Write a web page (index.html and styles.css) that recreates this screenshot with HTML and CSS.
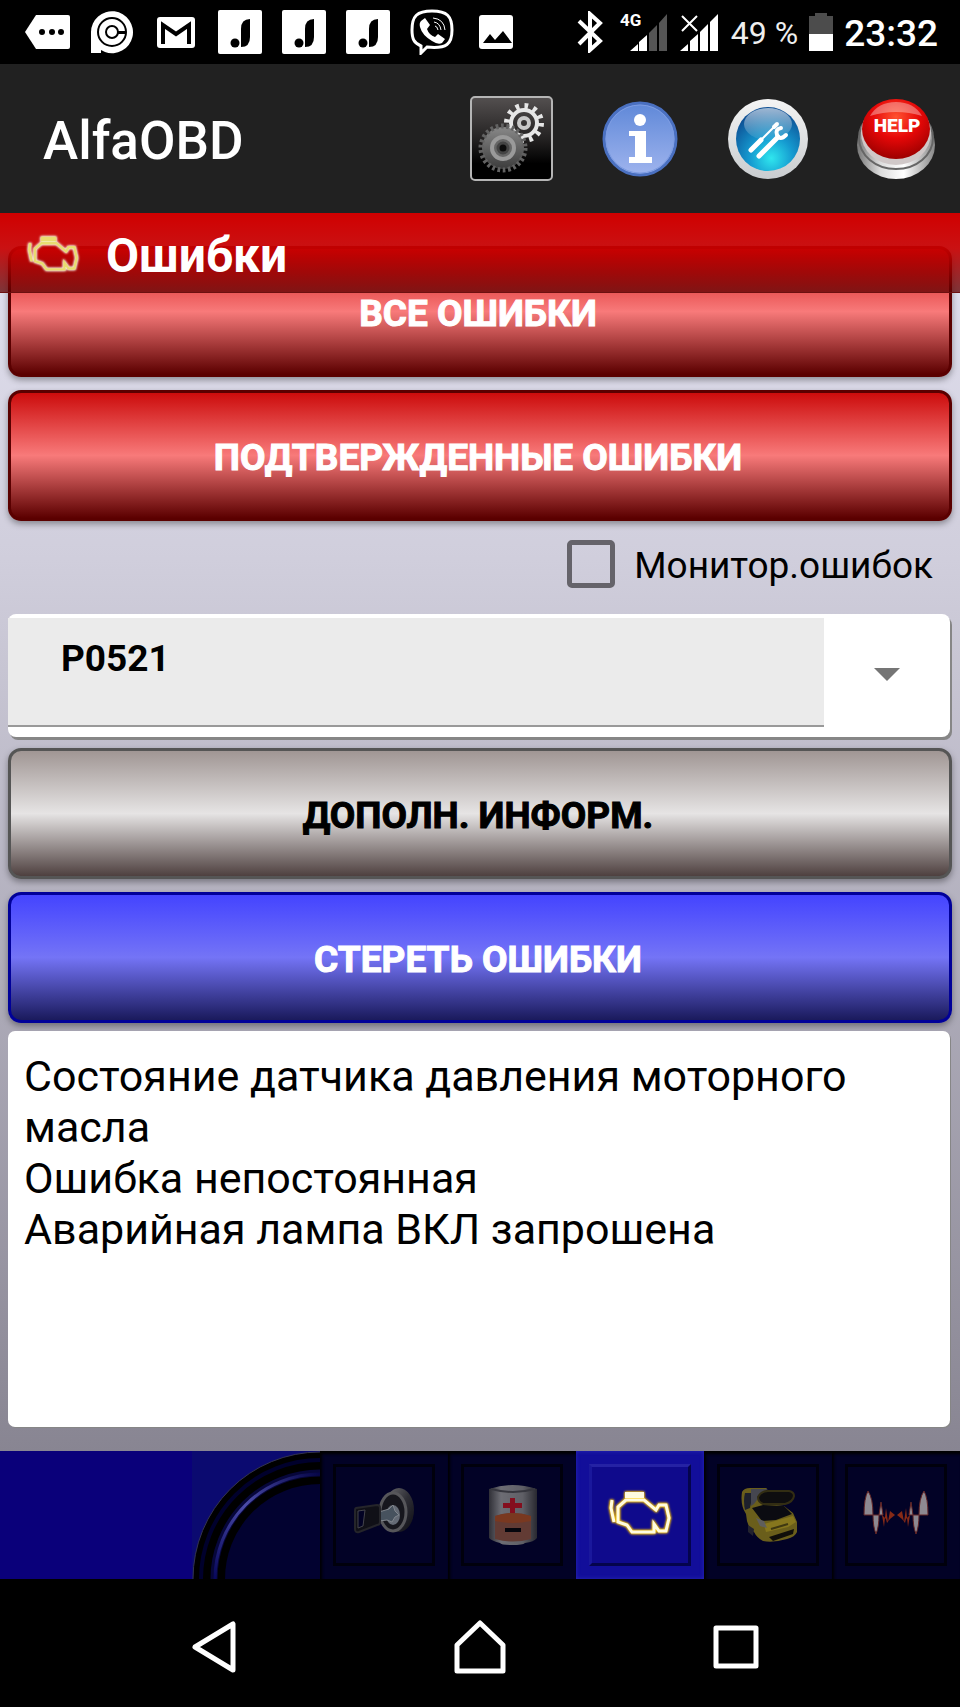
FILE: index.html
```
<!DOCTYPE html>
<html lang="ru">
<head>
    <meta charset="UTF-8">
    <meta name="viewport" content="width=device-width, initial-scale=1.0">
    <title>AlfaOBD</title>
    <link rel="stylesheet" href="styles.css">
</head>
<body>
    <!-- shared shapes -->
    <svg class="defs" width="0" height="0" aria-hidden="true">
        <defs>
            <symbol id="japp" viewBox="0 0 46 46">
                <rect x="1" y="1" width="44" height="44" rx="2" fill="#fff"/>
                <circle cx="18" cy="34" r="4.500" fill="#000"/>
                <path d="M24 38V20q0-10 9-10v18q0 10-9 10z" fill="#000"/>
            </symbol>
            <symbol id="engine" viewBox="30 38 66 46">
                <path d="M48 44h19" stroke-width="6"/>
                <path d="M35 49l-1 8 3 14" stroke-width="3"/>
                <path d="M49 49l-8 7v15l9 3 5 7h22v-8l5 7h7l3-13-3-13h-7l-3 5-12-10z" stroke-width="3"/>
            </symbol>
        </defs>
    </svg>

    <div class="statusbar">
        <div class="notifications">
            <svg width="46" height="46" viewBox="0 0 46 46"><path d="M11 6h32q2 0 2 2v30q0 2-2 2H11L0 23z" fill="#fff"/><circle cx="17" cy="23" r="3"/><circle cx="27" cy="23" r="3"/><circle cx="36" cy="23" r="3"/></svg>
            <svg width="46" height="46" viewBox="0 0 46 46"><path d="M2 44V23a21 21 0 1 1 14 20l-4-2v3z" fill="#fff"/><circle cx="23" cy="23" r="14" fill="none" stroke="#000" stroke-width="2"/><circle cx="23" cy="23" r="6" fill="none" stroke="#000" stroke-width="2"/><path d="M29 22h8v3h-8z"/></svg>
            <svg width="46" height="46" viewBox="0 0 46 46"><rect x="4" y="8" width="38" height="31" rx="3" fill="#fff"/><path d="M10 35V16l13 9 13-9v19" fill="none" stroke="#000" stroke-width="4"/></svg>
            <svg width="46" height="46"><use href="#japp"/></svg>
            <svg width="46" height="46"><use href="#japp"/></svg>
            <svg width="46" height="46"><use href="#japp"/></svg>
            <svg width="46" height="46" viewBox="0 0 46 46"><path d="M23 2C8 2 3 7 3 21c0 9 2 13 9 16v7l6-6c20 2 25-3 25-17C43 7 38 2 23 2z" fill="none" stroke="#fff" stroke-width="3"/><path d="M12 12l4-3 5 7-3 4q2 6 8 8l3-3 7 5-3 4q-4 2-10-2-10-6-12-14-1-4 1-6z" fill="#fff"/><path d="M24 9q11 1 12 12M25 13q6 1 7 8M26 17q2 0 3 4" fill="none" stroke="#fff" stroke-width="1"/></svg>
            <svg width="46" height="46" viewBox="0 0 46 46"><rect x="6" y="6" width="34" height="34" rx="3" fill="#fff"/><path d="M10 34l7-9 5 6 8-9 9 12z"/></svg>
        </div>
        <div class="indicators">
            <svg width="32" height="42" viewBox="0 0 32 42"><path d="M2 10l21 20-10 9V3l10 9L2 33" fill="none" stroke="#fff" stroke-width="4"/></svg>
            <svg width="50" height="48" viewBox="0 -3 50 48"><text x="1" y="15" class="net">4G</text><path d="M11 40l8-7v7zM20 31l8-7v16h-8z" fill="#fff"/><path d="M30 22l8-8v26h-8zM40 12l8-9v37h-8z" fill="#555"/></svg>
            <svg width="42" height="42" viewBox="0 0 42 42"><path d="M3 5l15 15M18 5L3 20" stroke="#fff" stroke-width="2"/><path d="M1 40l8-7v7zM11 30l8-7v17h-8zM21 21l8-8v27h-8zM31 11l8-8v37h-8z" fill="#fff"/></svg>
            <span class="percent">49 %</span>
            <svg width="26" height="42" viewBox="0 0 26 42"><path d="M1 5h6V2h12v3h6v18H1z" fill="#4c4c4c"/><path d="M1 23h24v17H1z" fill="#fff"/></svg>
            <span class="clock">23:32</span>
        </div>
    </div>

    <header class="appbar">
        <h1>AlfaOBD</h1>
        <button type="button" class="action" aria-label="Настройки">
            <svg width="84" height="86" viewBox="0 0 84 86">
                <defs>
                    <linearGradient id="plate" x1="0" y1="0" x2="0" y2="1"><stop offset="0" stop-color="#545050"/><stop offset="0.500" stop-color="#242222"/><stop offset="0.800" stop-color="#000"/></linearGradient>
                    <linearGradient id="steel" x1="0" y1="0" x2="0" y2="1"><stop offset="0" stop-color="#888"/><stop offset="1" stop-color="#3c3c3c"/></linearGradient>
                </defs>
                <rect x="1" y="1" width="81" height="83" rx="4" fill="url(#plate)" stroke="#b5b5b5" stroke-width="2"/>
                <circle cx="54" cy="27" r="13" fill="none" stroke="#e6e6e6" stroke-width="4"/>
                <circle cx="54" cy="27" r="17" fill="none" stroke="#e6e6e6" stroke-width="6" stroke-dasharray="3.600 5.300"/>
                <circle cx="54" cy="27" r="5" fill="none" stroke="#c8c8c8" stroke-width="4"/>
                <circle cx="33" cy="52" r="21" fill="url(#steel)"/>
                <circle cx="33" cy="52" r="22" fill="none" stroke="#626262" stroke-width="5" stroke-dasharray="2.700 2.618"/>
                <circle cx="33" cy="52" r="11" fill="#666" stroke="#9a9a9a" stroke-width="4"/>
                <circle cx="33" cy="52" r="5" fill="#0c0c0c" stroke="#444" stroke-width="3"/>
            </svg>
        </button>
        <button type="button" class="action" aria-label="Информация">
            <svg width="76" height="76" viewBox="0 0 76 76">
                <defs><linearGradient id="info" x1="0" y1="0" x2="0" y2="1"><stop offset="0" stop-color="#5f88d8"/><stop offset="1" stop-color="#9fb4ee"/></linearGradient></defs>
                <circle cx="38" cy="38" r="36" fill="url(#info)" stroke="#4a70c0" stroke-width="3"/>
                <circle cx="38" cy="38" r="34" fill="none" stroke="#7d9ce2" stroke-width="1"/>
                <circle cx="38" cy="19" r="6" fill="#fff"/>
                <path d="M27 30h17v26h6v6H27v-6h6V35h-6z" fill="#fff"/>
            </svg>
        </button>
        <button type="button" class="action" aria-label="Инструменты">
            <svg width="80" height="80" viewBox="0 0 80 80">
                <defs>
                    <linearGradient id="ring" x1="0" y1="0" x2="0" y2="1"><stop offset="0" stop-color="#f4f4f4"/><stop offset="1" stop-color="#c9cccf"/></linearGradient>
                    <radialGradient id="pool" cx="0.550" cy="0.800" r="0.750"><stop offset="0" stop-color="#2fe6ee"/><stop offset="0.450" stop-color="#159ad0"/><stop offset="1" stop-color="#0d4f94"/></radialGradient>
                    <linearGradient id="gloss" x1="0" y1="0" x2="0" y2="1"><stop offset="0" stop-color="#fff" stop-opacity="0.600"/><stop offset="1" stop-color="#fff" stop-opacity="0.050"/></linearGradient>
                </defs>
                <circle cx="40" cy="40" r="40" fill="url(#ring)"/>
                <circle cx="40" cy="40" r="32" fill="url(#pool)"/>
                <ellipse cx="40" cy="25" rx="24" ry="16" fill="url(#gloss)"/>
                <g fill="none" stroke="#fff" stroke-linecap="round">
                    <path d="M23 51l10-10" stroke-width="5"/>
                    <path d="M32 42l14-14" stroke-width="2"/>
                    <path d="M46 28l3-3" stroke-width="4"/>
                    <path d="M31 57l19-19" stroke-width="5"/>
                    <path d="M53 29q-6 1-4 7 3 6 9 0" stroke-width="4"/>
                </g>
            </svg>
        </button>
        <button type="button" class="action" aria-label="Помощь">
            <svg width="80" height="82" viewBox="0 0 80 82">
                <defs>
                    <linearGradient id="base" x1="0" y1="0" x2="1" y2="0"><stop offset="0" stop-color="#777"/><stop offset="0.300" stop-color="#ddd"/><stop offset="0.600" stop-color="#fff"/><stop offset="1" stop-color="#888"/></linearGradient>
                    <radialGradient id="dome" cx="0.500" cy="0.300" r="0.700"><stop offset="0" stop-color="#ff5230"/><stop offset="0.500" stop-color="#e60808"/><stop offset="1" stop-color="#9d0000"/></radialGradient>
                </defs>
                <ellipse cx="40" cy="47" rx="39" ry="34" fill="url(#base)"/>
                <ellipse cx="40" cy="40" rx="37" ry="31" fill="none" stroke="#666" stroke-width="2"/>
                <ellipse cx="40" cy="35" rx="35" ry="32" fill="#d0c8c8"/>
                <ellipse cx="40" cy="31" rx="34" ry="30" fill="url(#dome)"/>
                <path d="M14 18Q22 4 40 4t26 14q-26-8-52 0z" fill="#fff" opacity="0.350"/>
                <text x="41" y="34" text-anchor="middle" class="help">HELP</text>
            </svg>
        </button>
    </header>

    <main class="screen">
        <div class="titlebar">
            <svg class="engine engine-title" width="54" height="40"><use href="#engine"/></svg>
            <h2>Ошибки</h2>
        </div>
        <button type="button" class="btn red">ВСЕ ОШИБКИ</button>
        <button type="button" class="btn red">ПОДТВЕРЖДЕННЫЕ ОШИБКИ</button>
        <div class="monitor">
            <input type="checkbox" id="monitor">
            <label for="monitor">Монитор.ошибок</label>
        </div>
        <div class="spinner">
            <select id="code" aria-label="Код ошибки">
                <option>P0521</option>
            </select>
            <label class="arrow" for="code"></label>
        </div>
        <button type="button" class="btn gray">ДОПОЛН. ИНФОРМ.</button>
        <button type="button" class="btn blue">СТЕРЕТЬ ОШИБКИ</button>
        <textarea class="details" aria-label="Описание ошибки" readonly>Состояние датчика давления моторного масла
Ошибка непостоянная
Аварийная лампа ВКЛ запрошена</textarea>
    </main>

    <nav class="tabs">
        <div class="corner">
            <svg width="128" height="128" viewBox="0 0 128 128">
                <defs><linearGradient id="shine" x1="0" y1="1" x2="1" y2="0"><stop offset="0" stop-color="#08085c"/><stop offset="0.500" stop-color="#4b4ba8"/><stop offset="1" stop-color="#060648"/></linearGradient></defs>
                <rect width="128" height="128" fill="#0b0a70"/>
                <circle cx="128" cy="128" r="127" fill="#000" stroke="#333350" stroke-width="1"/>
                <circle cx="128" cy="128" r="119" fill="none" stroke="#00002c" stroke-width="4"/>
                <path d="M22 128A106 106 0 0 1 128 22" fill="none" stroke="#06063a" stroke-width="7"/>
                <path d="M23 128A105 105 0 0 1 128 23" fill="none" stroke="url(#shine)" stroke-width="3"/>
                <circle cx="128" cy="128" r="97" fill="#020230" stroke="#000" stroke-width="4"/>
            </svg>
        </div>
        <button type="button" class="tab" aria-label="Подключение">
            <svg width="128" height="128" viewBox="0 0 128 128">
                <defs><linearGradient id="lock" x1="0" y1="0" x2="1" y2="1"><stop offset="0" stop-color="#8a8a86"/><stop offset="0.500" stop-color="#3a3a3a"/><stop offset="1" stop-color="#101010"/></linearGradient></defs>
                <ellipse cx="79" cy="59" rx="15" ry="22" fill="url(#lock)"/>
                <ellipse cx="73" cy="61" rx="13" ry="19" fill="#1c1c1c" stroke="#6b6b68" stroke-width="3"/>
                <ellipse cx="73" cy="64" rx="7" ry="10" fill="#7d8589"/>
                <path d="M59 61l10-3 4-4 2 6 4 4-4 2-3 5-5-2-8 1z" fill="#59666c" stroke="#a0a6a6" stroke-width="1"/>
                <path d="M36 57l21-3q3 0 3 3v14q0 3-3 3l-18 7q-4 1-4-3V60q0-3 1-3z" fill="#141414" stroke="#2e2e2c" stroke-width="2"/>
                <path d="M38 60l7-1-2 16-5 2z" fill="#020224" stroke="#555" stroke-width="1"/>
            </svg>
        </button>
        <button type="button" class="tab" aria-label="Состояние">
            <svg width="128" height="128" viewBox="0 0 128 128">
                <defs><linearGradient id="cell" x1="0" y1="0" x2="1" y2="0"><stop offset="0" stop-color="#3c3c3c"/><stop offset="0.250" stop-color="#888"/><stop offset="0.700" stop-color="#777"/><stop offset="1" stop-color="#333"/></linearGradient></defs>
                <path d="M41 38q23-8 48 0v49q-3 4-12 5-2 2-13 2t-12-2q-8-2-11-5z" fill="url(#cell)"/>
                <path d="M43 38q22 6 44 0" fill="none" stroke="#444" stroke-width="2"/>
                <path d="M47 65q18-6 36 0v23q-18 5-36 0z" fill="#7b4a38"/>
                <path d="M47 65q18-6 36 0v5q-18 4-36 0z" fill="#97461f"/>
                <path d="M62 47h5v5h7v5h-7v5h-5v-5h-7v-5h7z" fill="#a5121d"/>
                <path d="M57 77h16v4H57z" fill="#080808"/>
            </svg>
        </button>
        <button type="button" class="tab active" aria-label="Ошибки">
            <svg class="engine" width="66" height="46"><use href="#engine"/></svg>
        </button>
        <button type="button" class="tab" aria-label="Автомобиль">
            <svg width="128" height="128" viewBox="0 0 128 128">
                <path d="M38 41q2-4 8-4h17l-7 10 2 5 22 3 9 7 4 9v10q-2 5-10 7-14 4-24 2-6-3-9-9-7-4-8-18-6-9-4-22z" fill="#857619"/>
                <path d="M41 42h8l-3 15-5 2q-2-9 0-17z" fill="#24282e"/>
                <path d="M47 38h17l-6 4-8 11-3 2z" fill="#56585a"/>
                <path d="M54 46q3-6 10-6h21q5 1 5 5-1 6-9 8H59q-5-2-5-7z" fill="#12100a" stroke="#3f380f" stroke-width="2"/>
                <path d="M48 57l11-3 21 1 8 8-16 6-14 1z" fill="#0e0e0c"/>
                <path d="M60 73l29-8 3 6-8 5-22 5z" fill="#a8941c"/>
                <path d="M65 86l25-8-1 5-20 7z" fill="#141104"/>
                <path d="M52 67l8 3 3 7-7-2z" fill="#77766a"/>
                <path d="M44 74l6 4-1 7-5-4z" fill="#2a2a30"/>
                <path d="M67 78l17-5" stroke="#4f460c" stroke-width="2"/>
            </svg>
        </button>
        <button type="button" class="tab" aria-label="Графики">
            <svg width="128" height="128" viewBox="0 0 128 128">
                <g fill="#b0abac" stroke="#7c2f26" stroke-width="1">
                    <path d="M32 64q0-17 4-24 5 7 5 24zM41 64h6q0 12-3 19-3-7-3-19zM47 64l2-13 2 13z"/>
                    <path d="M96 64q0-17-4-24-5 7-5 24zM87 64h-6q0 12 3 19 3-7 3-19zM81 64l-2-13-2 13z"/>
                </g>
                <path d="M50 64l2 12 2-19 2 14 2-11 5 4-5 4-3 4-1-4zM78 64l-2 12-2-19-2 14-2-11-5 4 5 4 3 4 1-4z" fill="#a83413"/>
            </svg>
        </button>
    </nav>

    <div class="navbar">
        <button type="button" aria-label="Назад"><svg width="66" height="54" viewBox="0 0 66 54"><path d="M42 4v46L4 27z"/></svg></button>
        <button type="button" aria-label="Домой"><svg width="54" height="56" viewBox="0 0 54 56"><path d="M4 26L27 4l23 22v26H4z"/></svg></button>
        <button type="button" aria-label="Обзор"><svg width="46" height="44" viewBox="0 0 46 44"><path d="M3 3h40v38H3z"/></svg></button>
    </div>
</body>
</html>
```
FILE: styles.css
```
* {
    box-sizing: border-box;
}
body {
    margin: 0;
    min-height: 100vh;
    display: flex;
    flex-direction: column;
    background-color: #000;
    font-family: Roboto, 'Noto Sans', sans-serif;
    color: #000;
}
button {
    margin: 0;
    padding: 0;
    border: none;
    background: none;
    font-family: inherit;
    cursor: pointer;
}
svg {
    display: block;
}
.defs {
    position: absolute;
}

/* status bar */
.statusbar {
    height: 64px;
    padding: 0 22px 0 25px;
    display: flex;
    justify-content: space-between;
    align-items: center;
    color: #fff;
}
.notifications {
    display: flex;
    gap: 18px;
}
.indicators {
    display: flex;
    align-items: center;
    gap: 10px;
}
.percent {
    padding-top: 2px;
    font-size: 32px;
    color: #eee;
}
.clock {
    padding-top: 2px;
    font-size: 37px;
    font-weight: 500;
}
.net {
    font-size: 17px;
    font-weight: 700;
    fill: #fff;
}

/* app bar */
.appbar {
    height: 149px;
    padding-left: 43px;
    display: flex;
    align-items: center;
    background-color: #212121;
    color: #fff;
}
h1 {
    flex: 1;
    margin: 0;
    padding-top: 4px;
    font-size: 53px;
    font-weight: 500;
}
.action {
    width: 128px;
    display: flex;
    justify-content: center;
}
.help {
    font-size: 19px;
    font-weight: 900;
    fill: #fff;
}

/* content */
.screen {
    position: relative;
    flex: 1;
    padding: 33px 8px 24px;
    display: flex;
    flex-direction: column;
    background: linear-gradient(#e2e1f0, #d0cedc 28%, #888592);
}
.titlebar {
    position: absolute;
    top: 0;
    left: 0;
    right: 0;
    height: 80px;
    padding-left: 26px;
    display: flex;
    align-items: center;
    gap: 26px;
    background: linear-gradient(rgb(208, 0, 0), rgba(200, 0, 0, 0.92) 45%, rgba(95, 0, 0, 0.76));
    border-bottom: 1px solid #6d1010;
    color: #fff;
}
h2 {
    margin: 0;
    padding-top: 6px;
    font-size: 48px;
    line-height: 56px;
    font-weight: 700;
}
.engine {
    fill: none;
    stroke: #fffbe0;
    filter: drop-shadow(0 0 1px #ffc800) drop-shadow(0 0 1px #ffc800);
}
.engine-title {
    stroke: #e8dc70;
    filter: drop-shadow(0 0 1px #fff) drop-shadow(0 0 1px #e8d8c0);
}
.btn {
    height: 131px;
    margin-bottom: 13px;
    padding: 3px 4px 0 0;
    border: 3px solid;
    border-radius: 13px;
    box-shadow: 0 3px 6px rgba(0, 0, 0, 0.35);
    font-size: 37px;
    font-weight: 700;
    -webkit-text-stroke: 1px;
}
.red {
    background: linear-gradient(#cc0c0c, #f87a7a 50%, #5c0000);
    border-color: #5a0000;
    color: #fff;
}
.gray {
    background: linear-gradient(#a09694, #e6e4e4 50%, #4e403f);
    border-color: #555;
    color: #000;
}
.blue {
    background: linear-gradient(#4444ff, #7474f6 50%, #1a1a5c);
    border-color: #000099;
    color: #fff;
    margin-bottom: 8px;
}
.red + .monitor {
    margin-top: -13px;
}
.monitor {
    height: 93px;
    padding: 0 19px 8px 0;
    display: flex;
    justify-content: flex-end;
    align-items: center;
    gap: 19px;
    font-size: 37px;
}
.monitor input {
    appearance: none;
    width: 48px;
    height: 48px;
    margin: 0;
    border: 5px solid #65636a;
    border-radius: 5px;
}
.monitor label {
    padding-top: 4px;
}
.spinner {
    height: 123px;
    margin-bottom: 11px;
    margin-right: 2px;
    padding: 4px 0 10px;
    display: flex;
    background-color: #fff;
    border-radius: 8px;
    box-shadow: 2px 3px 0 #868686;
}
select {
    appearance: none;
    flex: 1;
    padding: 0 0 26px 53px;
    border: none;
    border-bottom: 2px solid #999;
    border-radius: 0;
    background-color: #ebebeb;
    color: #000;
    font-family: inherit;
    font-size: 37px;
    font-weight: 700;
}
.arrow {
    width: 126px;
    padding-top: 4px;
    display: flex;
    justify-content: center;
    align-items: center;
}
.arrow::before {
    content: "";
    border: 13px solid transparent;
    border-top-color: #757575;
    border-bottom: none;
}
.details {
    flex: 1;
    margin-right: 2px;
    padding: 20px 16px;
    border: none;
    border-radius: 7px;
    background-color: #fff;
    box-shadow: 1px 1px 0 #868686;
    color: #000;
    font-family: inherit;
    font-size: 43px;
    line-height: 51px;
    resize: none;
}

/* bottom tabs */
.tabs {
    height: 128px;
    display: flex;
    justify-content: flex-end;
    background-color: #0a007a;
}
.tab {
    position: relative;
    width: 128px;
    display: flex;
    justify-content: center;
    align-items: center;
    background-color: #020226;
    box-shadow: inset 2px 3px 3px #000;
}
.tab::before {
    content: "";
    position: absolute;
    inset: 13px;
    border: 3px solid #00000c;
}
.active {
    background-color: #120e9a;
    box-shadow: inset 0 0 4px #2a28b8;
}
.active::before {
    border-color: #2522a4 #04044c #04044c #1a189c;
    background-color: #0f0a8c;
}
.tab svg {
    position: relative;
    opacity: 0.8;
}
.tab.active svg {
    margin-bottom: 6px;
    opacity: 1;
}

/* system buttons */
.navbar {
    height: 128px;
    padding-right: 32px;
    padding-left: 32px;
    display: flex;
    justify-content: center;
}
.navbar button {
    width: 256px;
    padding-top: 8px;
    display: flex;
    justify-content: center;
    align-items: center;
}
.navbar path {
    fill: none;
    stroke: #fff;
    stroke-width: 5;
    stroke-linejoin: round;
}
```
